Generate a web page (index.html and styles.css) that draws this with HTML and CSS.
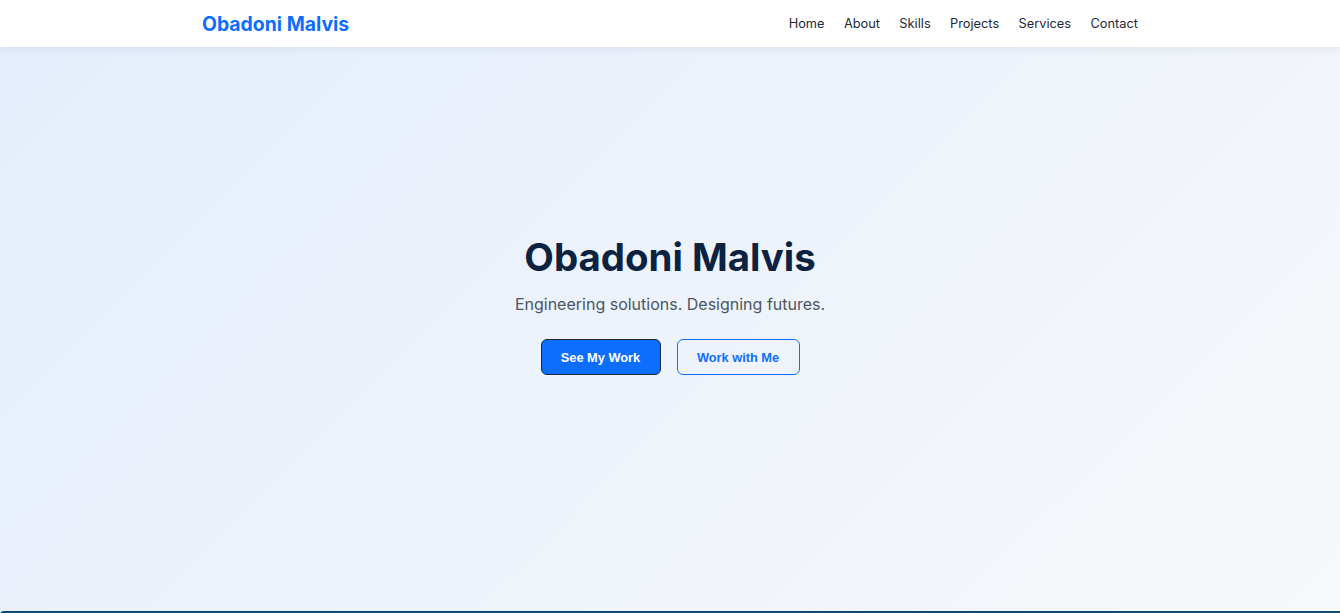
FILE: index.html
```html
<!DOCTYPE html>
<html lang="en">
<head>
<meta charset="utf-8">
<title>Obadoni Malvis</title>
<link rel="stylesheet" href="styles.css">
</head>
<body>
<header class="site-header">
  <div class="container header-inner">
    <a class="logo" href="#">Obadoni Malvis</a>
    <nav class="nav">
      <a href="#">Home</a>
      <a href="#">About</a>
      <a href="#">Skills</a>
      <a href="#">Projects</a>
      <a href="#">Services</a>
      <a href="#">Contact</a>
    </nav>
  </div>
</header>
<section class="hero">
  <div class="hero-content">
    <h1 class="hero-title">Obadoni Malvis</h1>
    <p class="hero-sub">Engineering solutions. Designing futures.</p>
    <div class="hero-actions">
      <a class="btn btn-primary" href="#">See My Work</a>
      <a class="btn btn-outline" href="#">Work with Me</a>
    </div>
  </div>
</section>
<section class="next-section"></section>
</body>
</html>
```

FILE: styles.css
```css
* { box-sizing: border-box; }
html, body { margin: 0; padding: 0; }
body {
  font-family: Inter, "Liberation Sans", sans-serif;
  background: #f6f8fa;
  overflow: hidden;
}
a { text-decoration: none; }
.container {
  max-width: 1000px;
  margin: 0 auto;
  padding: 0 32px;
}
.site-header {
  background: #ffffff;
  height: 47px;
  box-shadow: 0 2px 8px rgba(15, 30, 60, 0.08);
  position: relative;
  z-index: 2;
}
.header-inner {
  height: 47px;
  display: flex;
  align-items: center;
  justify-content: space-between;
}
.logo {
  color: #0d6efd;
  font-weight: 700;
  font-size: 19.4px;
}
.nav {
  display: flex;
  gap: 19.4px;
}
.nav a {
  color: #1e293b;
  font-size: 12.8px;
}
.hero {
  height: 564px;
  background: linear-gradient(135deg, #e4eefc 0%, #f7f8fa 100%);
  display: flex;
  align-items: center;
  justify-content: center;
  padding-bottom: 49px;
}
.hero-content {
  text-align: center;
}
.hero-title {
  margin: 0;
  font-size: 38.4px;
  font-weight: 700;
  color: #0b2340;
  line-height: 46px;
}
.hero-sub {
  margin: 14px 0 25px;
  font-size: 16px;
  color: #4b5563;
}
.hero-actions {
  display: flex;
  justify-content: center;
  gap: 16px;
}
.btn {
  font-family: "Liberation Sans", Arial, sans-serif;
  font-weight: 700;
  font-size: 12.8px;
  height: 36px;
  display: inline-flex;
  align-items: center;
  justify-content: center;
  border-radius: 6px;
}
.btn-primary {
  width: 120px;
  background: #0d6efd;
  color: #ffffff;
  border: 1px solid #1f2937;
}
.btn-outline {
  width: 123px;
  color: #0d6efd;
  border: 1px solid #0d6efd;
  background: transparent;
}
.next-section {
  height: 40px;
  background: #0d4a78;
  border-top-left-radius: 4px;
}
```
